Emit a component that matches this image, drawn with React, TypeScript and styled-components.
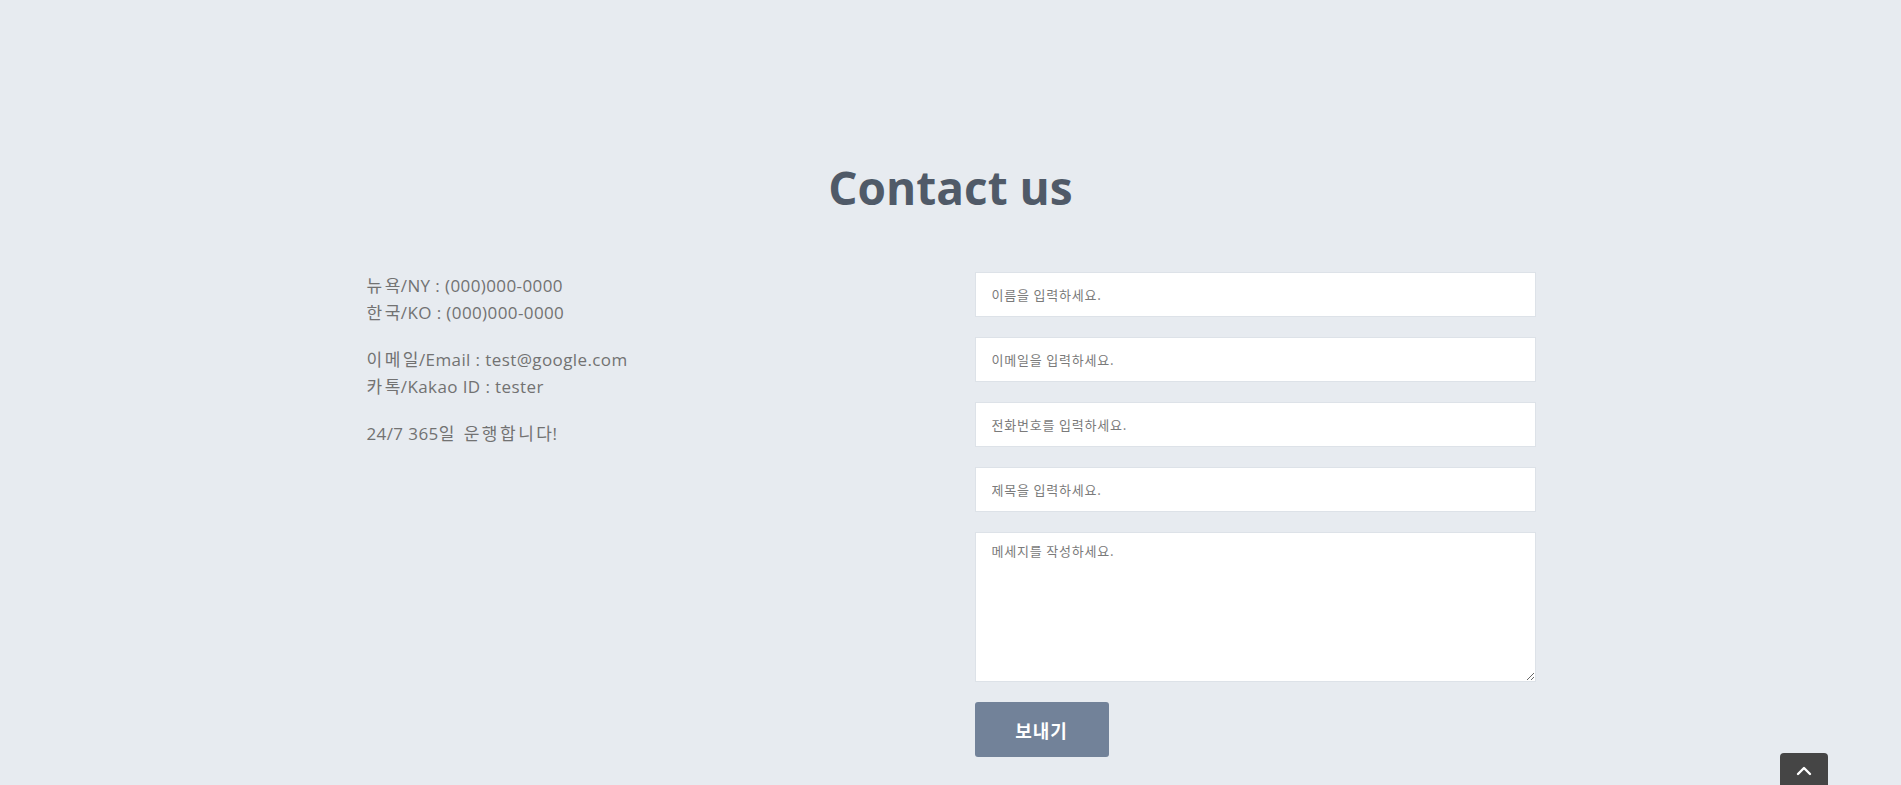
import React from "react";
import styled, { createGlobalStyle } from "styled-components";

const GlobalStyle = createGlobalStyle`
  * { box-sizing: border-box; }
  html, body {
    margin: 0;
    padding: 0;
    background: #e7ebf0;
    overflow: hidden;
  }
  body {
    font-family: "Open Sans", "Noto Sans CJK KR", sans-serif;
  }
`;

const Page = styled.section`
  min-height: 785px;
  padding-top: 157px;
`;

const Container = styled.div`
  width: 1170px;
  margin: 0 auto;
`;

const Title = styled.h2`
  margin: 0 0 55px;
  text-align: center;
  font-family: "Open Sans", sans-serif;
  font-weight: 700;
  font-size: 46px;
  line-height: 60px;
  color: #505a68;
`;

const Columns = styled.div`
  display: grid;
  grid-template-columns: 609px 561px;
`;

const Info = styled.div`
  padding-left: 1px;
  color: #727272;
  font-family: "Open Sans", "Noto Sans CJK KR", sans-serif;
  font-size: 17px;
  letter-spacing: 0.4px;
  line-height: 27px;
`;

const Para = styled.p`
  margin: 0 0 20px;
`;

const Ko = styled.span`
  letter-spacing: 2.5px;
  margin-right: -2px;
`;

const Form = styled.form`
  display: flex;
  flex-direction: column;
  gap: 20px;
  align-items: flex-start;
`;

const fieldStyles = `
  width: 100%;
  border: 1px solid #dde2e8;
  background: #fff;
  border-radius: 0;
  padding: 0 16px;
  font-family: "Noto Sans CJK KR", sans-serif;
  font-size: 13px;
  letter-spacing: 0.8px;
  color: #555;
  outline: none;
  &::placeholder { color: #7a7a7a; }
`;

const Input = styled.input`
  ${fieldStyles}
  height: 45px;
`;

const TextArea = styled.textarea`
  ${fieldStyles}
  height: 150px;
  padding-top: 8px;
  resize: vertical;
  line-height: 19px;
`;

const SendButton = styled.button`
  width: 134px;
  height: 55px;
  border: none;
  border-radius: 3px;
  background: #728299;
  color: #fff;
  font-family: "Noto Sans CJK KR", sans-serif;
  font-weight: 700;
  font-size: 18px;
  letter-spacing: 1px;
  cursor: pointer;
`;

const TopButton = styled.button`
  position: fixed;
  left: 1780px;
  top: 753px;
  width: 48px;
  height: 48px;
  border: none;
  border-radius: 4px 4px 0 0;
  background: #454545;
  display: flex;
  justify-content: center;
  padding-top: 12px;
`;

const Chevron = () => (
  <svg width="16" height="12" viewBox="0 0 16 12">
    <path d="M2 9 L8 3 L14 9" fill="none" stroke="#fff" strokeWidth="2.4" strokeLinecap="round" strokeLinejoin="round" />
  </svg>
);

export default function App() {
  return (
    <>
      <GlobalStyle />
      <Page>
        <Container>
          <Title>Contact us</Title>
          <Columns>
            <Info>
              <Para>
                <Ko>뉴욕</Ko>/NY : (000)000-0000
                <br />
                <Ko>한국</Ko>/KO : (000)000-0000
              </Para>
              <Para>
                <Ko>이메일</Ko>/Email : test@google.com
                <br />
                <Ko>카톡</Ko>/Kakao ID : tester
              </Para>
              <Para>
                24/7 365<Ko>일 운행합니다</Ko>!
              </Para>
            </Info>
            <Form onSubmit={(e) => e.preventDefault()}>
              <Input placeholder="이름을 입력하세요." />
              <Input placeholder="이메일을 입력하세요." />
              <Input placeholder="전화번호를 입력하세요." />
              <Input placeholder="제목을 입력하세요." />
              <TextArea placeholder="메세지를 작성하세요." />
              <SendButton type="submit">보내기</SendButton>
            </Form>
          </Columns>
        </Container>
      </Page>
      <TopButton aria-label="맨 위로">
        <Chevron />
      </TopButton>
    </>
  );
}
